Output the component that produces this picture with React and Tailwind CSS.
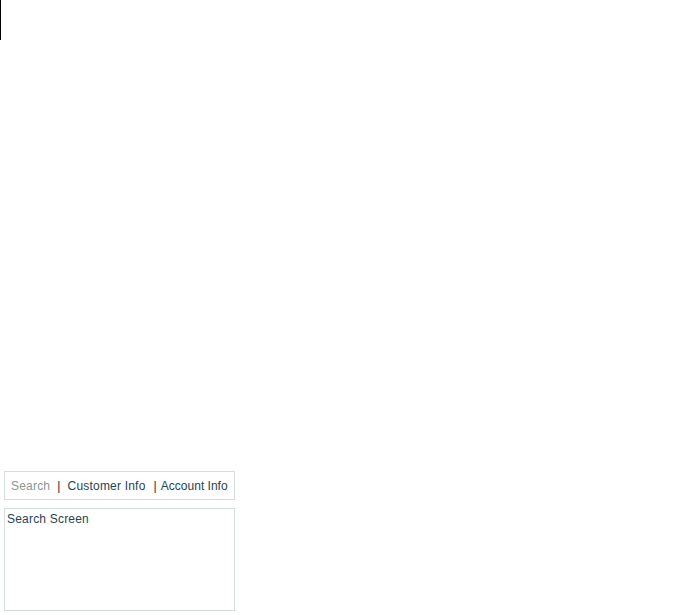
export default function App() {
  return (
    <div className="w-[694px] h-[615px] bg-white font-['Liberation_Sans',Arial,sans-serif] text-[12px] text-[#27434f] tracking-[0.2px]">
      <div className="w-px h-10 bg-black" />
      <div className="pl-1 pt-[431px]">
        <div className="w-[231px] h-[29px] border border-[#d5dede] flex items-center pl-[6px] leading-none whitespace-nowrap">
          <span className="shrink-0 text-[#8c9696]">Search</span>
          <span className="shrink-0 ml-[7px] text-[#1a2a30]">|</span>
          <span className="shrink-0 ml-[7px]">Customer Info</span>
          <span className="shrink-0 ml-[8px] text-[#1a2a30]">|</span>
          <span className="shrink-0 ml-[4px] tracking-normal">Account Info</span>
        </div>
        <div className="mt-2 w-[231px] h-[103px] border border-[#d5dede] pl-[2px] pt-[3px] leading-[14px]">
          Search Screen
        </div>
      </div>
    </div>
  )
}
